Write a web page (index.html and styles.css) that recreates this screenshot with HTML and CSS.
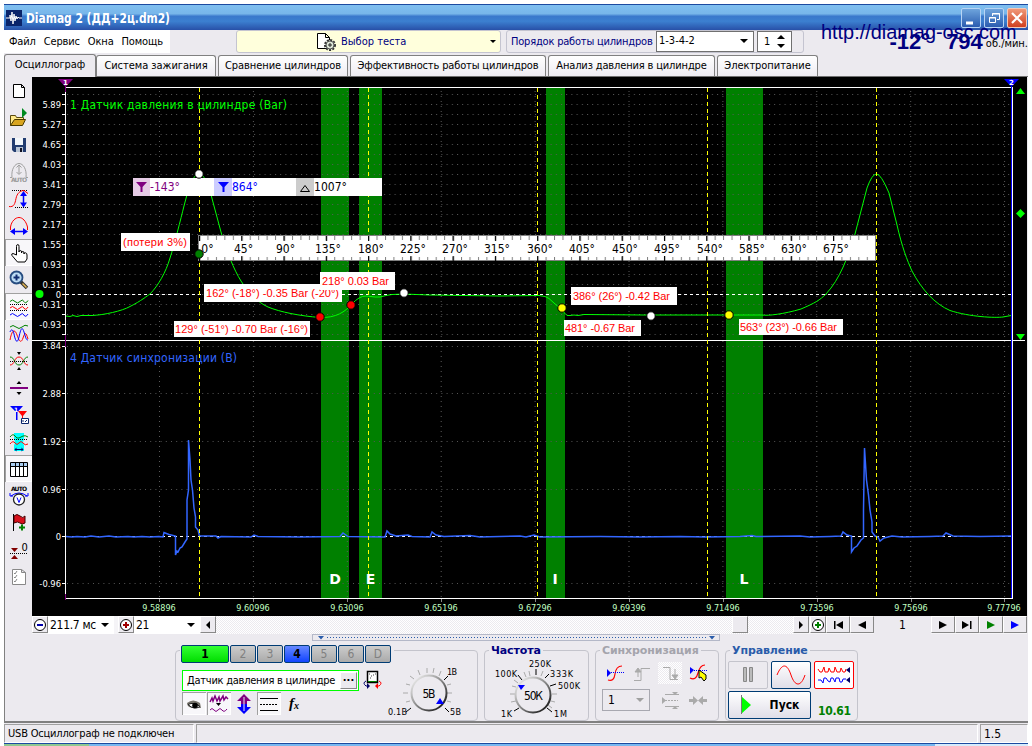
FILE: index.html
```html
<!DOCTYPE html>
<html lang="ru">
<head>
  <meta charset="utf-8" />
  <title>Diamag 2 (ДД+2ц.dm2)</title>
  <link rel="stylesheet" href="styles.css">
</head>
<body>
<div class="window">

  <header class="titlebar">
    <svg class="app-icon" width="16" height="16" viewBox="0 0 16 16"><rect width="16" height="16" fill="#0a246a"/><path d="M0 8h4v-3l1 6 1-9 1 12 1-10 1 7 1-5 1 3 1-2 1 1h3" fill="none" stroke="#fff"/></svg>
    <h1><svg width="156" height="22"><text x="1" y="16" textLength="144" lengthAdjust="spacingAndGlyphs">Diamag 2 (ДД+2ц.dm2)</text></svg></h1>
    <div class="win-buttons">
      <button><svg width="18" height="18"><path d="M4 14h7" stroke="#fff" stroke-width="3"/></svg></button>
      <button><svg width="18" height="18" fill="none" stroke="#fff"><path d="M7.500 7V4.500h7v6H12M7 5h8"/><path d="M4.500 8.500h6v5h-6zM4 9h7"/></svg></button>
      <button class="close"><svg width="18" height="18"><path d="M4 4l10 10M14 4L4 14" stroke="#fff" stroke-width="2.200"/></svg></button>
    </div>
  </header>

  <div class="toprow">
    <nav class="menu"><span>Файл</span><span>Сервис</span><span>Окна</span><span>Помощь</span></nav>
    <div class="test-select">
      <svg width="22" height="20" viewBox="0 0 22 20"><path d="M1.500 1.500h8l4 4v11h-12zM9.500 1.500v4h4" fill="#fff" stroke="#000"/><circle cx="14" cy="13" r="5" fill="#cdd8c8" stroke="#333" stroke-width="2" stroke-dasharray="2 1.300"/><circle cx="14" cy="13" r="4" fill="#dde6d8" stroke="#555"/><path d="M14 11v4M12 13h4" stroke="#222"/></svg>
      <span>Выбор теста</span>
      <i class="arrow small"></i>
    </div>
    <div class="order">
      <label>Порядок работы цилиндров</label>
      <div class="combo order-combo">1-3-4-2<i class="arrow"></i></div>
      <div class="spin">1<svg width="8" height="14"><path d="M4 0l4 4H0zM4 13l4-4H0z"/></svg></div>
    </div>
    <div class="rpm"><b>-12°</b><b>794</b><span>об./мин.</span></div>
  </div>
  <div class="site-url">http://diamag-osc.com</div>

  <nav class="tabs">
    <a class="active t1">Осциллограф</a>
    <a class="t2">Система зажигания</a>
    <a class="t3">Сравнение цилиндров</a>
    <a class="t4">Эффективность работы цилиндров</a>
    <a class="t5">Анализ давления в цилиндре</a>
    <a class="t6">Электропитание</a>
  </nav>

  <main>
    <aside class="tools">
      <button><svg viewBox="0 0 20 20"><path d="M4.500 3.500h8l3 3v10h-11zM12.500 3.500v3h3" fill="#fff" stroke="#000"/></svg></button>
      <button><svg viewBox="0 0 20 20"><path d="M1.500 17.500v-10h5l1 2h7v3" fill="#ffe98a" stroke="#5a4a10"/><path d="M1.500 17.500l4-6h11l-3 6z" fill="#d9a520" stroke="#4a3a00"/><path d="M13 0v10l5-5z" fill="#008a20"/></svg></button>
      <button><svg viewBox="0 0 20 20"><path d="M3 3h14v14H5l-2-2z" fill="#223c70"/><path d="M6 3h8v7H6z" fill="#f2f6fa"/><path d="M7 12h7v5H7z" fill="#b8c4d4"/><path d="M11 13h2v4h-2z" fill="#112"/></svg></button>
      <button><svg viewBox="0 0 20 20" fill="none" stroke="#a0a0a0"><path d="M1 15.500h2C2 7 6 1.500 10 1.500S18 7 17 15.500h2M10 3v9M7.500 5.500L10 3l2.500 2.500M7.500 10l2.500 2.500L12.500 10"/><text x="2" y="20" textLength="16" class="ico-txt gray">AUTO</text></svg></button>
      <button><svg viewBox="0 0 20 20" fill="none"><path d="M3 1.500h15M6 18.500h13" stroke="#000" stroke-dasharray="1 1"/><path d="M0 17.500c5 1 6-3 7-8s4-8 8-8l4 3" stroke="red"/><path d="M14.500 4v13" stroke="#00f" stroke-width="1.500"/><path d="M14.500 2l3.500 5h-7zM14.500 18.500l3.500-5h-7z" fill="#00f"/></svg></button>
      <button><svg viewBox="0 0 20 20" fill="none"><path d="M1.500 14v-3c1-6 5-9.500 8.500-9.500s7 3.500 8.500 9.500v3" stroke="red"/><path d="M3 15.500h14" stroke="#00f" stroke-width="1.500"/><path d="M1 15.500l5-3.500v7zM19 15.500l-5-3.500v7z" fill="#00f"/></svg></button>
      <button class="on"><svg viewBox="0 0 20 20"><path d="M7.500 12V3.500q0-2 1.300-2t1.200 2V9q0-1.500 1.300-1.500T12.500 9v1q0-1.500 1.300-1.500T15 10v1q0-1.500 1.500-1.200T18 12v4l-2 3H8.500L3 12.500q-1-2 1-2z" fill="#fff" stroke="#000"/></svg></button>
      <button><svg viewBox="0 0 20 20"><circle cx="7.500" cy="7.500" r="6" fill="#bcdcf4" stroke="#264c80" stroke-width="1.800"/><path d="M4.500 7.500h6M7.500 4.500v6" stroke="#102c70" stroke-width="2"/><path d="M12 12l6 6" stroke="#333" stroke-width="3.500"/><path d="M13.500 13.500l4 4" stroke="#e8b850" stroke-width="1.500"/></svg></button>
      <button class="on"><svg viewBox="0 0 20 20" fill="none"><path d="M1 4.500q2.500-3 5 0t5 0 4 0 4-1" stroke="green"/><path d="M1 7.500h18M1 13.500h18" stroke="#000" stroke-dasharray="1 1"/><path d="M1 11q2.500-3 5 0t5 0 4 0 4-1" stroke="red"/><path d="M1 18q2.500-3 5 0t5 0 4 0 4-1" stroke="#00f"/></svg></button>
      <button><svg viewBox="0 0 20 20" fill="none"><path d="M1 3q3-3 6 0t6 0 6-1" stroke="green"/><path d="M1 16C3 5 6 5 8 11s4 9 6 3 3-6 5 1" stroke="red"/><path d="M1 8c1-3 3-3 4 2s3 12 5 3 3-11 5-5 2 8 4 8" stroke="#00f"/></svg></button>
      <button><svg viewBox="0 0 20 20" fill="none"><path d="M1 14c5 0 4-8 9-8s4 8 9 8" stroke="red"/><path d="M1 6c5 0 4 8 9 8s4-8 9-8" stroke="green"/><path d="M1 10.500h18" stroke="#000" stroke-dasharray="1 1"/><path d="M8 1h4l-2 3zM8 19h4l-2-3z" fill="#000"/></svg></button>
      <button><svg viewBox="0 0 20 20"><path d="M7.500 6h5L10 3zM7.500 14h5L10 17z"/><path d="M1 10h18" stroke="#800080" stroke-width="2"/></svg></button>
      <button><svg viewBox="0 0 20 20"><path d="M9 6h9l-4 5v7h-1v-7z" fill="red"/><path d="M1 1h13L8.500 7v8h-1.500V7z" fill="#00f"/><path d="M12.500 13.500h7v5h-7z" fill="#fff" stroke="#0a246a"/><path d="M14 17v-2M16 17l2-2" stroke="#0a246a"/><text x="5" y="7" class="ico-txt white">1</text></svg></button>
      <button><svg viewBox="0 0 20 20" fill="none"><path d="M5 1h10v5l-1 5 1 2v6H5v-6l1-2-1-5z" fill="#0ff"/><path d="M1 5q3-4 5-1t4 2 4-2 5 1" stroke="green"/><path d="M1 7.500h18" stroke="#000" stroke-dasharray="1 1"/><path d="M1 12q3-4 5-1t4 0 4 0 5 1" stroke="red"/><path d="M7 17.500h6" stroke="#006"/><path d="M5.500 17.500l2-2v4zM14.500 17.500l-2-2v4z" fill="#006"/></svg></button>
      <button class="on"><svg viewBox="0 0 20 20"><path d="M1.500 3.500h17v14h-17z" fill="#fff" stroke="#000"/><path d="M2 4h16v3H2z" fill="#a8ccf0"/><path d="M1 7.500h18M6.500 4v13M10.500 4v13M14.500 4v13" stroke="#000"/></svg></button>
      <button><svg viewBox="0 0 20 20" fill="none"><text x="2" y="5" textLength="16" class="ico-txt">AUTO</text><path d="M2 10q8-6 16 0M1 7v3h3M19 7v3h-3" stroke="#00f"/><circle cx="10" cy="13.500" r="5.500" fill="#fff" stroke="#222" stroke-width="1.300"/><path d="M8 11.500l2 5 2-5" stroke="#00f"/></svg></button>
      <button><svg viewBox="0 0 20 20"><path d="M4.500 1v17" stroke="#000"/><path d="M5 3q3-3 6 0t5 0v7q-3 2-5 0t-6 0z" fill="#d8101c" stroke="#400"/><path d="M10 14.500h6M13 11.500v6" stroke="green" stroke-width="2"/></svg></button>
      <button><svg viewBox="0 0 20 20"><path d="M1 13.500h18" stroke="#000" stroke-dasharray="1 1"/><path d="M2 8h7l-3.500 4zM2 19h7l-3.500-4z" fill="#800000"/><text x="12.500" y="11" class="ico-zero">0</text></svg></button>
      <button><svg viewBox="0 0 20 20" fill="none" stroke="#888"><path d="M3.500 2.500h9l4 3v12h-13zM12.500 2.500v3h4" fill="#fff"/><path d="M5 6l1 1 2-3M5 10l1 1 2-3M5 14l1 1 2-3"/></svg></button>
    </aside>

    <div class="work">
      <!-- scope: user units are window pixels -->
      <svg class="scope" width="995" height="539" viewBox="32 77 995 539">
        <defs>
          <pattern id="dots" patternUnits="userSpaceOnUse" x="67" y="94" width="5.200" height="10"><rect width="1" height="1" fill="#5a5a5a"/></pattern>
          <pattern id="dotsV" patternUnits="userSpaceOnUse" x="159" y="91" width="93.900" height="5"><rect width="1" height="1" fill="#5a5a5a"/></pattern>
          <pattern id="ticks" patternUnits="userSpaceOnUse" x="199" y="236" width="8.453" height="30"><rect width="1" height="30" fill="#808080"/></pattern>
          <pattern id="ticksBig" patternUnits="userSpaceOnUse" x="199" y="236" width="42.270" height="30"><rect width="1.200" height="30"/></pattern>
        </defs>
        <rect x="32" y="77" width="995" height="539"/>

        <g fill="#008000">
          <rect x="321" y="88" width="28" height="510"/>
          <rect x="359" y="88" width="23" height="510"/>
          <rect x="546" y="88" width="19" height="510"/>
          <rect x="726" y="88" width="37" height="510"/>
        </g>
        <rect x="66" y="94" width="945" height="241" fill="url(#dots)"/>
        <rect x="66" y="91" width="945" height="507" fill="url(#dotsV)"/>
        <path class="grid" d="M67 346.500h944M67 393.500h944M67 441.500h944M67 489.500h944M67 583.500h944"/>

        <!-- axes -->
        <g class="axis">
          <path d="M65.500 87v512M65 87.500h948M32 340.500h993M65 598.500h948M1012.500 87v512"/>
          <path d="M63.500 94v241" stroke-width="3" stroke-dasharray="1 9"/>
          <path d="M62 294.500h3M62 346.500h3M62 393.500h3M62 441.500h3M62 489.500h3M62 536.500h3M62 583.500h3"/>
          <path d="M66 294.500h945M66 536.500h945" stroke-dasharray="3 3"/>
          <path d="M159.500 599v3M253.500 599v3M347.500 599v3M441.500 599v3M535.500 599v3M629.500 599v3M723.500 599v3M817.500 599v3M911.500 599v3M1004.500 599v3" stroke="#888"/>
        </g>
        <path d="M1011.500 80v518" stroke="#00f"/>
        <path d="M65.500 80v12M65.500 335v12M65.500 594v6" stroke="#800080"/>

        <path class="ch1" d="M66 316l4 .5 3-1 4 1 4-1 11 0C104 315 122 311 130 306.500C141 301 147 296 150 294C158 286 166 272 170 258C174 246 181 218 184 206L189 187Q194 174 199 174T209 187L214 206L221 232C226 250 234 270 241 281C248 292 257 302 268 307C280 312 300 316 320 317.500C336 318 345 312 352 304Q359 296 366 296l5 .5 4 .5 5 0 6-1.500 6-1 12-.500 25 1 70 1 40-.5q7 .5 10 3l10 9 8 8 3 0 4-.5 4 .5 6-1 60 .5 78 0h40C768 316 784 314 801 309C815 303 820 300 826 294C840 279 848 257 855 234L861 211L867 188Q872 174 876.500 174T889 193L897 225C902 247 907 260 912 271C922 290 935 304 950 310.500C970 317 995 318 1003 317l8-1.500"/>
        <path class="ch2" d="M66 536.500l6 .5 5-.5 8 .5 6-1 8 1 10-1 7 1 12-.5 6 .5 8-.5 8 .5 9-.5 4 .5L164 532.500L169 534.500L175.500 536V555L177 551L178 552L180 548L182 547L185 542L187 539V500L188.500 490V440L190 460L191 480L192.500 490L194 508L195.500 517V527L198 530L199.500 536H216L218 538L221 536.500L251 537L254 535L258 536.500L300 537L340 536.500L343 533L348 536.500L385 537L387 531L390 534L396 536L408 535L412 536.500L430 537L432 532L436 535L444 536.500L470 535.500L480 537L520 536L526 537L534 535L540 537L600 536.500L640 537L680 536.500L705 537L740 536.500L752 535.500L756 536.500L800 536L810 537L830 536.500L841 536L843 532L847 535L851.500 536V552L854 548L857 546L861 540L863.500 538V510L864.500 448L866.500 480L868.500 495L870 510L872 522V532L875 536L878 537L880 541L884 538L892 536L902 537L930 536.500L943 536L946 533L953 536L980 536.500L1011 536"/>

        <path class="mark" d="M199.500 88v510M368.500 88v510M537.500 88v510M707.500 88v510M876.500 88v510"/>

        <g class="ylab">
          <text x="61" y="108">5.89</text><text x="61" y="128">5.27</text><text x="61" y="148">4.65</text>
          <text x="61" y="168">4.03</text><text x="61" y="188">3.41</text><text x="61" y="208">2.79</text>
          <text x="61" y="228">2.17</text><text x="61" y="248">1.55</text><text x="61" y="268">0.93</text>
          <text x="61" y="288">0.31</text><text x="61" y="298">0</text><text x="61" y="308">-0.31</text>
          <text x="61" y="328">-0.93</text><text x="61" y="349">3.84</text><text x="61" y="397">2.88</text>
          <text x="61" y="445">1.92</text><text x="61" y="493">0.96</text><text x="61" y="540">0</text>
          <text x="61" y="587">-0.96</text>
        </g>
        <g class="xlab">
          <text x="159" y="611">9.58896</text><text x="253" y="611">9.60996</text><text x="347" y="611">9.63096</text>
          <text x="441" y="611">9.65196</text><text x="535" y="611">9.67296</text><text x="629" y="611">9.69396</text>
          <text x="723" y="611">9.71496</text><text x="817" y="611">9.73596</text><text x="911" y="611">9.75696</text>
          <text x="1004" y="611">9.77796</text>
        </g>
        <text class="chname" x="70" y="109" textLength="217" fill="#0f0">1 Датчик давления в цилиндре (Bar)</text>
        <text class="chname" x="70" y="362" textLength="167" fill="#36f">4 Датчик синхронизации (В)</text>

        <g class="phase"><text x="335" y="584">D</text><text x="370.500" y="584">E</text><text x="555" y="584">I</text><text x="744" y="584">L</text></g>

        <!-- cursors -->
        <path d="M58 79h15l-7.500 8z" fill="#800080"/><text class="cur" x="65.500" y="85">1</text>
        <path d="M1004 79h15l-7.500 8z" fill="#00f"/><text class="cur" x="1011.500" y="85">2</text>
        <path d="M1016 94h9l-4.500-6zM1020.500 209l4.500 4.500-4.500 4.500-4.500-4.500zM1016 334h9l-4.500 6z" fill="#0f0"/>
        <circle cx="39.500" cy="294" r="4" fill="#0f0"/>

        <!-- cursor readout -->
        <rect x="133" y="178" width="249" height="18" fill="#fff"/>
        <rect x="133" y="178" width="17" height="18" fill="#e6cce6"/>
        <rect x="214" y="178" width="18" height="18" fill="#ccf"/>
        <rect x="296" y="178" width="18" height="18" fill="#ccc"/>
        <path d="M136 182h11l-4.500 5v5h-2v-5z" fill="#800080"/>
        <path d="M218 182h11l-4.500 5v5h-2v-5z" fill="#00f"/>
        <path d="M300.500 191.500h9l-4.500-6z" fill="none" stroke="#000"/>
        <g class="read">
          <text x="150" y="191" textLength="30" fill="#800080">-143°</text>
          <text x="232" y="191" textLength="26" fill="#00f">864°</text>
          <text x="314" y="191" textLength="33">1007°</text>
        </g>

        <!-- degree ruler -->
        <rect x="198.500" y="235.500" width="677" height="25" fill="#fff" stroke="#808080"/>
        <rect x="199" y="236" width="676" height="4" fill="url(#ticks)"/><rect x="199" y="257" width="676" height="3" fill="url(#ticks)"/>
        <rect x="199" y="236" width="676" height="5" fill="url(#ticksBig)"/><rect x="199" y="256" width="676" height="5" fill="url(#ticksBig)"/>
        <g class="deg">
          <text x="207.500" y="253">0°</text><text x="243.500" y="253">45°</text><text x="285.500" y="253">90°</text>
          <text x="328" y="253">135°</text><text x="371" y="253">180°</text><text x="413" y="253">225°</text>
          <text x="455" y="253">270°</text><text x="497" y="253">315°</text><text x="540" y="253">360°</text>
          <text x="582" y="253">405°</text><text x="625" y="253">450°</text><text x="667" y="253">495°</text>
          <text x="710" y="253">540°</text><text x="752" y="253">585°</text><text x="794" y="253">630°</text>
          <text x="836" y="253">675°</text>
        </g>

        <!-- point labels -->
        <g fill="#fff">
          <rect x="121" y="233" width="69" height="18"/>
          <rect x="204" y="284" width="138" height="18"/>
          <rect x="174" y="321" width="136" height="16"/>
          <rect x="571" y="287" width="106" height="18"/>
          <rect x="564" y="320" width="77" height="16"/>
          <rect x="739" y="319" width="104" height="16"/>
        </g>
        <g class="val">
          <text x="123" y="246" textLength="64">(потери 3%)</text>
          <text x="206" y="297" textLength="133">162° (-18°) -0.35 Bar (-20°)</text>
          <rect x="320" y="272" width="75" height="18" fill="#fff"/>
          <text x="322" y="285" textLength="67">218° 0.03 Bar</text>
          <text x="175" y="333" textLength="133">129° (-51°) -0.70 Bar (-16°)</text>
          <text x="573" y="300" textLength="97">386° (26°) -0.42 Bar</text>
          <text x="565" y="332" textLength="70">481° -0.67 Bar</text>
          <text x="740" y="331" textLength="97">563° (23°) -0.66 Bar</text>
        </g>
        <g stroke="#000">
          <circle cx="199" cy="174" r="4.200" fill="#fff"/><circle cx="404" cy="293" r="4.200" fill="#fff"/><circle cx="651" cy="316" r="4.200" fill="#fff"/>
          <circle cx="199" cy="254" r="4.200" fill="#008000"/>
          <circle cx="320" cy="317" r="4.200" fill="red"/><circle cx="351" cy="305" r="4.200" fill="red"/>
          <circle cx="562" cy="308" r="4.200" fill="#ff0"/><circle cx="729" cy="315" r="4.200" fill="#ff0"/>
        </g>
      </svg>

      <div class="scrollrow">
        <button class="b16"><svg width="14" height="14"><circle cx="7" cy="7" r="5.500" fill="#fff" stroke="#000"/><path d="M4 7h6" stroke="#00a" stroke-width="2"/></svg></button>
        <div class="combo zoom-combo">211.7 мс<i class="arrow"></i></div>
        <button class="b16 gap"><svg width="14" height="14"><circle cx="7" cy="7" r="5.500" fill="#fff" stroke="#000"/><path d="M4 7h6M7 4v6" stroke="#a00000" stroke-width="2"/></svg></button>
        <div class="combo zoom-combo">21<i class="arrow"></i></div>
        <button class="b16"><svg width="14" height="14"><path d="M5 7l4-4v8z"/></svg></button>
        <div class="track"><button class="thumb"></button></div>
        <button class="b16"><svg width="14" height="14"><path d="M9 7L5 3v8z"/></svg></button>
        <button class="b16 zoom-in"><svg width="14" height="14"><circle cx="7" cy="7" r="5.500" fill="#fff" stroke="#000"/><path d="M4 7h6M7 4v6" stroke="green" stroke-width="2"/></svg></button>
        <button class="b24"><svg width="14" height="14"><path d="M12 3v8L5 7zM3 3h1.500v8H3z"/></svg></button>
        <button class="b24"><svg width="14" height="14"><path d="M11 3v8L3 7z"/></svg></button>
        <span class="page-no">1</span>
        <button class="b24"><svg width="14" height="14"><path d="M3 3v8l8-4z"/></svg></button>
        <button class="b24"><svg width="14" height="14"><path d="M2 3v8l7-4zM10 3h1.500v8H10z"/></svg></button>
        <button class="b24"><svg width="14" height="14"><path d="M3 3v8l8-4z" fill="green"/></svg></button>
        <button class="b24"><svg width="14" height="14"><path d="M3 3v8l8-4z" fill="#00f"/></svg></button>
      </div>
      <div class="splitter"><svg width="407" height="7"><path d="M5 2h6L8 5.500zM396 2h6l-3 3.500z" fill="#2a5caa"/><path d="M14 3.500h380" stroke="#2a5caa" stroke-dasharray="1 2"/></svg></div>

      <div class="panels">
        <section class="group channel">
          <div class="ch-buttons">
            <button class="c1">1</button><button>2</button><button>3</button><button class="c4">4</button><button>5</button><button>6</button><button>D</button>
          </div>
          <div class="ch-body">
            <div class="ch-left">
              <div class="ch-nameline">
                <div class="ch-name"><span>Датчик давления в цилиндре</span><button>···</button></div>
                <svg width="20" height="20"><path d="M4.500 1.500h10v11h-10z" fill="#fff" stroke="#000" stroke-width="1.500"/><path d="M6 4h1M8 6h1M10 5h1M7 8h1M12 4h1" stroke="#444"/><path d="M5 11.500h9" stroke="green"/><path d="M3 11q-4 2 0 5h3" fill="none" stroke="#006"/><path d="M4 13l3 3-3 3z" fill="#006"/><path d="M16 11q4 2 0 5h-3" fill="none" stroke="red"/><path d="M15 13l-3 3 3 3z" fill="red"/></svg>
              </div>
              <div class="ch-tools">
                <button class="on"><svg viewBox="0 0 20 20"><path d="M3 9q6-5 13 0l1 5H8q-5-1-5-5z" fill="#77746c"/><path d="M4 10.500q6-3 12 2-6 4-12-2z" fill="#fff" stroke="#222"/><circle cx="11" cy="11.500" r="2.800"/></svg></button>
                <button class="on"><svg viewBox="0 0 20 20" fill="none" stroke="#800080"><path d="M1 8l2-4 1 3 2-5 2 5 2-4 1 4 3-5 1 4 2-3 2 2" stroke-width="1.500"/><path d="M7 9h5l-2.500 3z" fill="#000" stroke="none"/><path d="M1 16q2-3 4 0t4 0 4 0 5-1"/></svg></button>
                <button><svg viewBox="0 0 20 20"><path d="M10 0l7 7h-4v3H7V7H3z" fill="#800080"/><path d="M10 20l7-7h-4v-3H7v3H3z" fill="#00f"/><path d="M10 3v14" stroke="#eceaef"/></svg></button>
                <button class="on"><svg viewBox="0 0 20 20" stroke="#000"><path d="M1 4.500h18M1 16.500h18"/><path d="M1 10.500h18" stroke-dasharray="2 1"/></svg></button>
                <button class="fx">f<small>x</small></button>
              </div>
            </div>
            <svg class="dial" width="84" height="60" viewBox="384 663 84 60">
              <defs><linearGradient id="rim" x1="0" y1="0" x2="1" y2="1"><stop offset="0" stop-color="#fff"/><stop offset=".5" stop-color="#888"/><stop offset="1"/></linearGradient></defs>
              <path d="M411 709l-5 4M445 709l4 4M444 681l4-4" stroke="#000"/>
              <path d="M410 702l-4 1M408 694h-5M410 686l-4-1M414 680l-4-3M420 676l-2-5M427 674v-5M433 674l1-5M439 677l2-5M447 694h5M447 686l4-1M447 702l4 1" stroke="#aaa"/>
              <circle cx="429" cy="694" r="17.500" fill="#eceaef" stroke="url(#rim)" stroke-width="2"/>
              <path d="M436 705l4-6 4 6z" fill="#00f"/>
              <g class="dial-txt"><text x="422.500" y="699" class="big" textLength="13">5В</text><text x="388" y="716" textLength="19">0.1В</text><text x="447" y="676" textLength="10">1В</text><text x="450" y="716" textLength="11">5В</text></g>
            </svg>
          </div>
        </section>

        <section class="group freq">
          <h2><span>Частота</span></h2>
          <svg class="dial" width="90" height="60" viewBox="492 658 90 60">
            <path d="M519 707l-5 3M547 707l5 4M550 685l6-2M545 677l4-4M536 674v-6M522 679l-4-5" stroke="#000"/>
            <path d="M516 700l-5 1M515 693h-5M516 686l-4-1M518 682l-4-3M526 676l-2-5M530 675l-1-5M541 675l2-5M552 693h5M551 700l4 1M548 704l4 3" stroke="#aaa"/>
            <circle cx="533" cy="694" r="17.500" fill="#eceaef" stroke="url(#rim)" stroke-width="2"/>
            <path d="M518 684h7l-4 5z" fill="#00f"/>
            <g class="dial-txt"><text x="524" y="698.500" class="big" textLength="19">50К</text><text x="495" y="676" textLength="22">100K</text><text x="529" y="666" textLength="22">250K</text><text x="550" y="676" textLength="23">333K</text><text x="558" y="688" textLength="22">500K</text><text x="501" y="716" textLength="11">1K</text><text x="554" y="716" textLength="13">1M</text></g>
          </svg>
        </section>

        <section class="group sync">
          <h2><span>Синхронизация</span></h2>
          <div class="sync-grid">
            <svg width="20" height="20" fill="none"><path d="M3 17q6 2 7-6t7-8" stroke="red" stroke-width="1.200"/><path d="M2 9.500h17" stroke="#00f" stroke-dasharray="1 1"/><path d="M2 6v8l4-4z" fill="#00f"/></svg>
            <svg width="20" height="20" fill="none" stroke="#aaa"><path d="M2 17.500h7v-12h9M6 14V7" /><path d="M3 9l3-4 3 4z" fill="#aaa"/></svg>
            <svg class="pressed" width="24" height="22" viewBox="-2 -1 24 22" fill="none" stroke="#aaa"><path d="M3 4.500h7v12h8M15 6v8"/><path d="M12 12l3 4 3-4z" fill="#aaa"/></svg>
            <svg width="20" height="20" fill="none"><path d="M2 15q6 3 8-5t7-8" stroke="red" stroke-width="1.200"/><path d="M2 7.500h17" stroke="#00f" stroke-dasharray="1 1"/><path d="M2 4v7l4-4z" fill="#00f"/><path d="M11 7v8l2-1 3 4 2-2v-4z" fill="#ff0" stroke="#000"/></svg>
            <div class="sync-combo">1<i class="arrow"></i></div>
            <svg width="20" height="20" fill="none" stroke="#aaa"><path d="M5 4.500h14M5 16.500h14"/><path d="M2 10.500h16" stroke-dasharray="2 1"/><path d="M2 7v7l4-3.500zM12 2h6l-3 3zM12 19h6l-3-3z" fill="#aaa" stroke="none"/></svg>
            <svg width="20" height="20" fill="#aaa"><path d="M1 9h4V6l5 4.500L5 15v-3H1zM19 9h-4V6l-5 4.500 5 4.500v-3h4z"/></svg>
          </div>
        </section>

        <section class="group control">
          <h2><span>Управление</span></h2>
          <div class="ctl-grid">
            <button class="off"><svg width="14" height="18"><path d="M2.500 1.500h3v14h-3zM8.500 1.500h3v14h-3z" fill="#bbb" stroke="#888"/></svg></button>
            <button><svg width="32" height="22" fill="none"><path d="M2 11C7-1 12-1 16 11s10 12 14 0" stroke="red"/></svg></button>
            <button class="rec"><svg width="34" height="20" fill="none"><path d="M1 4l2 3 2 0 2-5 1 5h3l1-4 2 4h3l1-5 2 5h3l1-4 2 4h2l1-3" stroke="red"/><path d="M1 15h3l2 3 1-5 2 0 2 3 2 1 1-4h2l2 4 1-4h3l1 4h2l1-3 3 0" stroke="#00f"/><path d="M33 2v6l-4-3zM33 12v6l-4-3z" fill="#006"/></svg></button>
            <button class="start"><svg width="12" height="20"><path d="M1 1v18l10-9z" fill="#0f0"/><path d="M1.500 0v19" stroke="#777"/></svg><b>Пуск</b></button>
            <b class="version">10.61</b>
          </div>
        </section>
      </div>
    </div>
  </main>

  <footer class="status">
    <div class="s1">USB Осциллограф не подключен</div>
    <div class="s2"></div>
    <div class="s3">1.5</div>
  </footer>
  <div class="taskbar"><i></i><b></b></div>
</div>
</body>
</html>
```
FILE: styles.css
```css
*
{
    box-sizing: border-box;
    margin: 0;
    padding: 0;
}
body
{
    width: 1032px;
    height: 746px;
    overflow: hidden;
    background: #fff;
    font: 11px/14px "DejaVu Sans Condensed", "DejaVu Sans", sans-serif;
    color: #000;
}
svg { display: block; }
button
{
    font: inherit;
    background: #eceaef;
    border: 0;
    display: flex;
    align-items: center;
    justify-content: center;
}
.window
{
    position: relative;
    width: 1024px;
    height: 742px;
    margin: 4px 0 0 4px;
    background: #eceaef;
    display: flex;
    flex-direction: column;
}

/* title bar */
.titlebar
{
    height: 26px;
    display: flex;
    align-items: center;
    padding: 0 1px 0 2px;
    border-top: 1px solid #1c4aa0;
    background: linear-gradient(#7fbff0 0, #78b6ea 35%, #3a78cc 45%, #3c80d0 65%, #2850a8 100%);
}
.titlebar h1 { flex: 1; margin-left: 3px; }
.titlebar text { font: bold 14px "DejaVu Sans Condensed", sans-serif; fill: #fff; }
.win-buttons { display: flex; gap: 3px; }
.win-buttons button
{
    width: 20px;
    height: 20px;
    border: 1px solid #b8d4f4;
    border-radius: 2px;
    background: linear-gradient(#6ea4dc, #2a5cb0);
}
.win-buttons .close { background: linear-gradient(#f09878, #d04020); border-color: #f4c8b8; }

/* menu and selectors */
.toprow { height: 24px; display: flex; align-items: flex-start; }
.menu { width: 166px; height: 23px; background: #fff; display: flex; gap: 8px; padding: 5px 0 0 5px; white-space: nowrap; }
.menu span { letter-spacing: -.15px; }
.test-select
{
    width: 265px;
    height: 23px;
    margin-left: 66px;
    border: 1px solid #c4c4d0;
    border-radius: 3px;
    background: #ffffdc;
    color: #000080;
    display: flex;
    align-items: center;
    gap: 3px;
    padding: 0 4px 0 79px;
}
.test-select .arrow { margin-left: auto; }
.arrow { border: 4px solid transparent; border-top-color: #000; border-bottom: 0; width: 0; height: 0; }
.arrow.small { border-width: 3px 3px 0; }
.order
{
    width: 298px;
    height: 23px;
    margin-left: 5px;
    border: 1px solid #c4c4d0;
    border-radius: 3px;
    color: #000080;
    display: flex;
    align-items: center;
    padding-left: 4px;
}
.order label { width: 145px; white-space: nowrap; letter-spacing: -.2px; }
.combo { background: #fff; color: #000; display: flex; align-items: center; justify-content: space-between; }
.order-combo { width: 98px; height: 21px; border: 1px solid #707070; padding: 0 5px 2px 2px; }
.spin { width: 35px; height: 21px; margin-left: 3px; border: 1px solid #707070; background: #fff; color: #000; display: flex; align-items: center; justify-content: space-between; padding: 0 6px; }
.rpm { margin-left: auto; display: flex; color: #000080; white-space: nowrap; font-family: "Liberation Sans", sans-serif; }
.rpm b { font-size: 22px; line-height: 23px; margin-right: 16px; }
.rpm b + b { margin-right: 3px; }
.rpm span { font: 11px/14px "DejaVu Sans Condensed", sans-serif; color: #000; margin-top: 7px; }
.site-url { position: absolute; left: 817px; top: 16px; font: 19.900px/24px "Liberation Sans", sans-serif; color: #000080; }

/* tabs */
.tabs { height: 23px; display: flex; align-items: flex-end; gap: 2px; border-bottom: 1px solid #707070; }
.tabs a
{
    height: 21px;
    border: 1px solid #808080;
    border-bottom: 0;
    border-radius: 3px 3px 0 0;
    background: linear-gradient(#fff, #eeecf2);
    text-align: center;
    line-height: 20px;
    white-space: nowrap;
    letter-spacing: -.05px;
}
.tabs .active { height: 23px; margin: 0 -2px -1px 0; background: #eceaef; }
.tabs .t1 { width: 92px; }
.tabs .t2 { width: 120px; }
.tabs .t3 { width: 130px; }
.tabs .t4 { width: 196px; letter-spacing: -.15px; }
.tabs .t5 { width: 167px; letter-spacing: -.15px; }
.tabs .t6 { width: 101px; }

main { display: flex; height: 646px; border-bottom: 2px solid #808080; border-left: 1px solid #808080; }
.tools { width: 27px; }
.tools button { width: 27px; height: 27px; }
.tools svg { width: 20px; height: 20px; }
.on { background: #f8f7fa; box-shadow: inset 1px 1px #a0a0a0, inset -1px -1px #fff; }
.ico-txt { font: bold 6px "DejaVu Sans", sans-serif; fill: #000; stroke: none; }
.ico-txt.gray { fill: #999; }
.ico-txt.white { fill: #fff; }
.ico-zero { font: 11px "DejaVu Sans Condensed", sans-serif; }
.work { width: 995px; }

/* scope */
.grid { stroke: #555; stroke-dasharray: 1 4.200; }
.axis { stroke: #fff; fill: none; }
.ch1 { fill: none; stroke: #0f0; }
.ch2 { fill: none; stroke: #36f; stroke-width: 1.500; }
.mark { stroke: #ff0; stroke-dasharray: 4 3; }
.ylab text { font: 9.300px "DejaVu Sans Condensed", sans-serif; fill: #fff; text-anchor: end; }
.xlab text { font: 9px "DejaVu Sans Condensed", sans-serif; fill: #c0ffc0; text-anchor: middle; }
.chname { font: 12px "DejaVu Sans Condensed", sans-serif; }
.phase text { font: bold 14px "DejaVu Sans", sans-serif; fill: #fff; text-anchor: middle; }
.cur { font: bold 7px "DejaVu Sans", sans-serif; fill: #fff; text-anchor: middle; }
.read text { font: 12px "DejaVu Sans Condensed", sans-serif; }
.deg text { font: 12px "DejaVu Sans Condensed", sans-serif; text-anchor: middle; }
.val text { font: 11px "Liberation Sans", sans-serif; fill: red; }

/* scroll row */
.scrollrow { height: 18px; display: flex; background: #f5f4f7; }
.scrollrow button { height: 17px; border: 1px solid; border-color: #fff #888 #888 #fff; }
.b16 { width: 16px; }
.b16.gap { margin-left: 4px; }
.b16.zoom-in { margin-left: 1px; }
.b24 { width: 24px; }
.zoom-combo { width: 66px; padding: 0 5px 0 2px; font-size: 12px; }
.zoom-combo { letter-spacing: -.3px; }
.track { flex: 1; display: flex; background: repeating-conic-gradient(#fff 0 25%, #eceaef 0 50%) 0 0/2px 2px; }
.track .thumb { width: 16px; margin-left: auto; margin-right: 45px; }
.page-no { width: 57px; text-align: center; font-size: 12px; line-height: 18px; background: #eceaef; }
.splitter { width: 408px; height: 7px; margin-left: 280px; border: 1px solid #b4b8c8; }
.splitter svg { margin-top: -1px; }

/* bottom panels */
.panels { display: flex; gap: 6px; padding: 4px 0 0 143px; }
.group { height: 71px; margin-top: 5px; border: 1px solid #c4c4cc; border-radius: 4px; }
.group h2 { font: bold 11px/14px "DejaVu Sans", sans-serif; margin-top: -7px; height: 14px; padding-left: 4px; color: #000080; letter-spacing: -.1px; }
.group h2 span { background: #eceaef; padding: 0 2px; }
.channel { width: 303px; }
.freq { width: 105px; }
.sync { width: 124px; }
.control { width: 133px; }
.ch-buttons { display: flex; gap: 1px; width: 214px; margin: -6px 0 0 4px; background: #eceaef; padding-left: 1px; }
.ch-buttons button { width: 26px; height: 18px; border: 1px solid #003c74; border-radius: 2px; background: linear-gradient(#ccc, #aaa); color: #808080; font-size: 12px; }
.ch-buttons .c1 { width: 48px; background: linear-gradient(#3f3, #0d0); color: #000; font-weight: bold; }
.ch-buttons .c4 { background: linear-gradient(#68f, #14f); color: #000; font-weight: bold; }
.ch-body { display: flex; }
.ch-left { width: 208px; padding: 7px 0 0 6px; }
.ch-nameline { display: flex; gap: 4px; }
.ch-name { width: 177px; height: 21px; border: 1px solid #0f0; background: #fff; display: flex; align-items: center; justify-content: space-between; padding: 0 1px 0 4px; white-space: nowrap; }
.ch-name span { letter-spacing: -.25px; }
.ch-name button { width: 17px; height: 17px; border: 1px solid; border-color: #fff #888 #888 #fff; font-weight: bold; line-height: 8px; }
.ch-tools { display: flex; gap: 1px; margin-top: 1px; }
.ch-tools button { width: 24px; height: 23px; }
.ch-tools svg { width: 20px; height: 20px; }
.fx { font: italic bold 15px "Liberation Serif", serif !important; }
.fx small { font-size: 10px; margin-top: 4px; }
.dial-txt text { font: 9px "DejaVu Sans Condensed", sans-serif; }
.dial-txt .big { font-size: 12px; }
.channel .dial { margin-top: -1px; }
.freq .dial { margin: 1px 0 0 7px; }
.sync h2 { color: #a4a4ac; }
.sync-grid { display: grid; grid-template-columns: 26px 28px 28px 28px; gap: 5px 0; justify-items: center; align-items: center; padding: 4px 0 0 6px; }
.pressed { background: repeating-conic-gradient(#fff 0 25%, #eceaef 0 50%) 0 0/2px 2px; }
.sync-combo { grid-column: span 2; width: 48px; height: 22px; justify-self: start; border: 1px solid #a8a8b0; display: flex; align-items: center; justify-content: space-between; padding: 0 5px; font-size: 12px; }
.sync-combo .arrow { border-top-color: #a0a0a0; }
.control h2 { color: #2a5caa; }
.ctl-grid { display: grid; grid-template-columns: 40px 40px 40px; gap: 2px 3px; padding: 3px 0 0 2px; }
.ctl-grid button { height: 28px; border: 1px solid #003c74; border-radius: 2px; background: linear-gradient(#fff, #e0dee8); }
.ctl-grid .off { border-color: #c4c4cc; background: #eceaef; }
.ctl-grid .rec { border-color: red; background: #fff; }
.ctl-grid .start { grid-column: span 2; gap: 18px; }
.start b { font: bold 12px "DejaVu Sans Condensed", sans-serif; }
.version { font: bold 12px/14px "DejaVu Sans Condensed", sans-serif; color: #008000; align-self: end; padding: 0 0 1px 4px; white-space: nowrap; letter-spacing: -.3px; }

/* status bar */
.status { height: 19px; margin-top: 1px; display: flex; gap: 2px; }
.status div { border: 1px solid; border-color: #a0a0a0 #fff #fff #a0a0a0; padding: 2px 0 0 3px; line-height: 14px; white-space: nowrap; }
.s1 { width: 190px; letter-spacing: -.2px; }
.s2 { flex: 1; }
.s3 { width: 48px; font-size: 12px; }
.taskbar { height: 3px; display: flex; border-top: 1px solid #1c4aa0; background: #d8ecfc; }
.taskbar i { width: 85px; background: #90c890; }
.taskbar b { width: 846px; background: #78b8f0; }
```
